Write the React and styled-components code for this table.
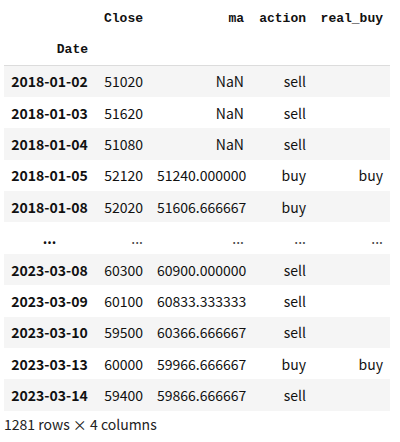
import React from 'react';
import styled, { createGlobalStyle } from 'styled-components';

const GlobalStyle = createGlobalStyle`
  body {
    margin: 0;
    background: #ffffff;
  }
`;

const columns = ['Close', 'ma', 'action', 'real_buy'];

const rows = [
  ['2018-01-02', '51020', 'NaN', 'sell', ''],
  ['2018-01-03', '51620', 'NaN', 'sell', ''],
  ['2018-01-04', '51080', 'NaN', 'sell', ''],
  ['2018-01-05', '52120', '51240.000000', 'buy', 'buy'],
  ['2018-01-08', '52020', '51606.666667', 'buy', ''],
  ['...', '...', '...', '...', '...'],
  ['2023-03-08', '60300', '60900.000000', 'sell', ''],
  ['2023-03-09', '60100', '60833.333333', 'sell', ''],
  ['2023-03-10', '59500', '60366.666667', 'sell', ''],
  ['2023-03-13', '60000', '59966.666667', 'buy', 'buy'],
  ['2023-03-14', '59400', '59866.666667', 'sell', ''],
];

const widths = [91, 55, 101, 62, 77];

const App = () => {
  return (
    <Wrapper>
      <GlobalStyle />
      <Frame>
        <colgroup>
          {widths.map((w, i) => <col key={i} style={{ width: w }} />)}
        </colgroup>
        <thead>
          <tr>
            <HeadCell />
            {columns.map((c) => <HeadCell key={c}>{c}</HeadCell>)}
          </tr>
          <tr>
            <HeadCell>Date</HeadCell>
            {columns.map((c) => <HeadCell key={c} />)}
          </tr>
        </thead>
        <Body>
          {rows.map((r, i) => (
            <Row key={i}>
              <IndexCell>{r[0]}</IndexCell>
              {r.slice(1).map((v, j) => (
                <Cell key={j} $ellipsis={v === '...'}>{v}</Cell>
              ))}
            </Row>
          ))}
        </Body>
      </Frame>
      <Footer>1281 rows × 4 columns</Footer>
    </Wrapper>
  );
};

const Wrapper = styled.div`
  padding: 3px 4px 0;
  font-family: "Noto Sans CJK KR", "Noto Sans", sans-serif;
  color: #111;
`;

const Frame = styled.table`
  table-layout: fixed;
  border-collapse: collapse;
  border-spacing: 0;
  width: 386px;
`;

const HeadCell = styled.th`
  height: 31px;
  padding: 0 7px;
  text-align: right;
  font-family: "Liberation Mono", "DejaVu Sans Mono", monospace;
  font-size: 13px;
  font-weight: 700;
  color: #111;
  vertical-align: middle;
  white-space: nowrap;

  tr:last-child > & {
    border-bottom: 1px solid #dcdcdc;
  }
`;

const Body = styled.tbody``;

const Row = styled.tr`
  height: 31.4px;

  &:nth-child(odd) {
    background: #f5f5f5;
  }
`;

const IndexCell = styled.th`
  padding: 0 7px;
  text-align: center;
  font-size: 14px;
  font-weight: 700;
  line-height: 18px;
  white-space: nowrap;
`;

const Cell = styled.td`
  padding: 0 7px;
  text-align: right;
  font-size: 14px;
  line-height: 18px;
  white-space: nowrap;
  color: ${(p) => (p.$ellipsis ? '#444' : '#111')};
`;

const Footer = styled.div`
  margin-top: 4px;
  font-size: 14px;
  line-height: 18px;
  color: #222;
`;

export default App;
